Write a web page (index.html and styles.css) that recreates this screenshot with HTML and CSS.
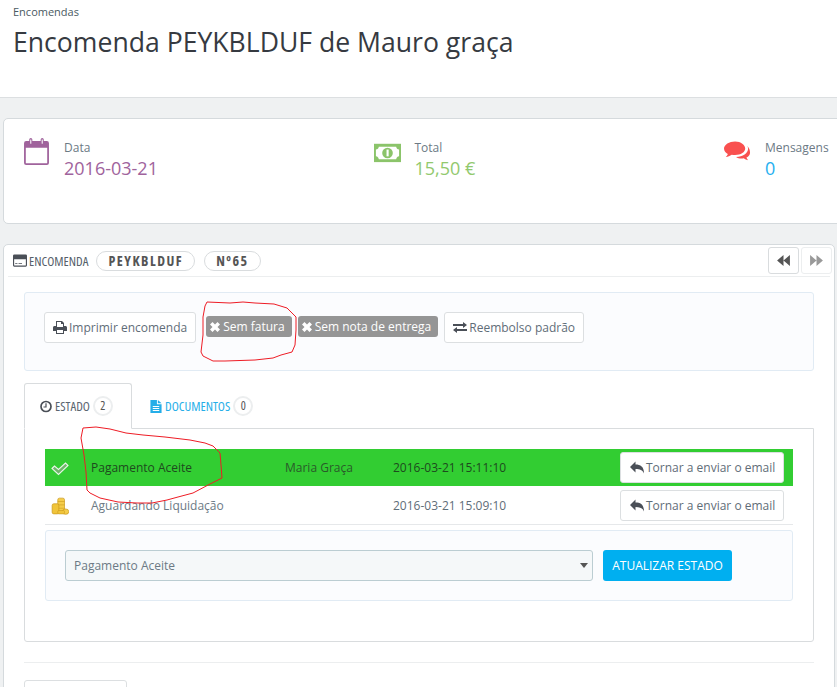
FILE: index.html
```html
<!DOCTYPE html>
<html lang="pt">
<head>
<meta charset="utf-8">
<title>Encomenda</title>
<link rel="stylesheet" href="styles.css">
</head>
<body>
<header class="page-head">
  <div class="crumb">Encomendas</div>
  <h1 class="title">Encomenda PEYKBLDUF de Mauro graça</h1>
</header>

<section class="kpis">
  <div class="kpi">
    <svg class="kpi-icon" viewBox="0 0 26 26"><path fill="#a0639c" fill-rule="evenodd" d="M3 3h3V1.500a1.500 1.500 0 0 1 3 0V3h8V1.500a1.500 1.500 0 0 1 3 0V3h3a2 2 0 0 1 2 2v19a2 2 0 0 1-2 2H3a2 2 0 0 1-2-2V5a2 2 0 0 1 2-2zm-.3 6.500v14.300c0 .3.2.5.5.5h19.600c.3 0 .5-.2.5-.5V9.500z"/><rect x="7" y="1.500" width="1" height="4" fill="#fff"/><rect x="18" y="1.500" width="1" height="4" fill="#fff"/></svg>
    <div><div class="kpi-label">Data</div><div class="kpi-value purple">2016-03-21</div></div>
  </div>
  <div class="kpi">
    <svg class="kpi-icon" viewBox="0 0 28 26"><rect x="0" y="5" width="28" height="19" fill="#8bc46a"/><path fill="#fff" d="M5 8h18c.4 1.800 1.200 2.600 3 3v7c-1.800.4-2.600 1.200-3 3H5c-.4-1.800-1.200-2.600-3-3v-7c1.800-.4 2.600-1.200 3-3z"/><circle cx="14" cy="14.500" r="5.500" fill="#8bc46a"/><rect x="13" y="11" width="2.200" height="7" fill="#fff"/></svg>
    <div><div class="kpi-label">Total</div><div class="kpi-value green">15,50 €</div></div>
  </div>
  <div class="kpi">
    <svg class="kpi-icon" viewBox="0 0 28 26"><path fill="#f9504f" d="M11.500 2.500C5.500 2.500 0 5.800 0 10c0 2.400 1.700 4.400 4 5.700-.5 1.300-1.300 2.200-2.200 3 2.300-.3 4.400-1 6.200-2.300 1.100.2 2.300.3 3.500.3 6 0 10.500-2.900 10.500-6.700s-4.500-7.500-10.500-7.500z"/><path fill="#f9504f" d="M24.200 7.200c.5 1 .8 1.900.8 2.800 0 5-5.400 8.500-12.500 8.700 1.500 1 3.500 1.600 5.600 1.600.8 0 1.600-.1 2.300-.2 1.300 1 2.800 1.600 4.600 1.900-.7-.8-1.300-1.600-1.700-2.800 2.200-1.100 3.700-3 3.700-5 0-2.700-1-5.100-2.800-7z"/></svg>
    <div><div class="kpi-label">Mensagens</div><div class="kpi-value blue">0</div></div>
  </div>
</section>

<section class="panel">
  <div class="panel-head">
    <svg class="ico head-ico" viewBox="0 0 16 14"><path fill="#4a4f57" fill-rule="evenodd" d="M1.500 0h13A1.500 1.500 0 0 1 16 1.500v11a1.500 1.500 0 0 1-1.500 1.500h-13A1.500 1.500 0 0 1 0 12.500v-11A1.500 1.500 0 0 1 1.500 0zM1.300 5.500v7c0 .1.100.2.200.2h13c.1 0 .2-.1.200-.2v-7zM2.500 10h2.600v1H2.500zm3.800 0h4v1h-4z"/></svg>
    <span class="head-label">ENCOMENDA</span>
    <span class="pill">PEYKBLDUF</span>
    <span class="pill">Nº65</span>
    <div class="pager">
      <span class="pager-btn"><svg class="pager-ico" viewBox="0 0 14 12"><path fill="#555" d="M7 0v12L0 6zm7 0v12L7 6z"/></svg></span>
      <span class="pager-btn off"><svg class="pager-ico" viewBox="0 0 14 12"><path fill="#999" d="M0 0l7 6-7 6zm7 0l7 6-7 6z"/></svg></span>
    </div>
  </div>

  <div class="well actions">
    <span class="btn"><svg class="ico" viewBox="0 0 14 13"><path fill="#4a4f57" fill-rule="evenodd" d="M3 0h6l2 2v3h1.500c.8 0 1.500.7 1.500 1.500V10h-3v3H3v-3H0V6.500C0 5.700.7 5 1.500 5H3zm1 1v5h6V3H8V1zm0 8v3h6V9z"/></svg>Imprimir encomenda</span>
    <span class="tag"><svg class="ico-x" viewBox="0 0 10 10"><path fill="#fff" d="M2.500 0L5 2.500 7.500 0 10 2.500 7.500 5 10 7.500 7.500 10 5 7.500 2.500 10 0 7.500 2.500 5 0 2.500z"/></svg>Sem fatura</span>
    <span class="tag"><svg class="ico-x" viewBox="0 0 10 10"><path fill="#fff" d="M2.500 0L5 2.500 7.500 0 10 2.500 7.500 5 10 7.500 7.500 10 5 7.500 2.500 10 0 7.500 2.500 5 0 2.500z"/></svg>Sem nota de entrega</span>
    <span class="btn"><svg class="ico" viewBox="0 0 14 12"><path fill="#4a4f57" d="M0 2.500h10V.5l4 3-4 3v-2H0zM14 7.500H4v-2l-4 3 4 3v-2h10z"/></svg>Reembolso padrão</span>
  </div>

  <div class="tabs">
    <div class="tab active">
      <svg class="tab-ico" viewBox="0 0 12 12"><circle cx="6" cy="6" r="5" fill="none" stroke="#4a4f57" stroke-width="1.700"/><path fill="none" stroke="#4a4f57" stroke-width="1.200" d="M6 2.800V6.500H3.500"/></svg>
      <span>ESTADO</span><span class="count">2</span>
    </div>
    <div class="tab link">
      <svg class="tab-ico" viewBox="0 0 12 14"><path fill="#25aee8" fill-rule="evenodd" d="M0 0h7v4.500h5V14H0zM8 0l4 3.500H8zM2.500 6.500v1h7v-1zm0 2.200v1h7v-1zm0 2.200v1h7v-1z"/></svg>
      <span>DOCUMENTOS</span><span class="count">0</span>
    </div>
  </div>

  <div class="tab-body">
    <div class="row current">
      <span class="cell-ico"><svg class="state-ico" viewBox="0 0 18 14"><path fill="#6fb56a" stroke="#e8f5e8" stroke-width="1.100" d="M1 7.500l2.500-2.500 4 3.500L14.500 2l2.500 2.500-9.500 9z"/></svg></span>
      <span class="cell-state">Pagamento Aceite</span>
      <span class="cell-name">Maria Graça</span>
      <span class="cell-date">2016-03-21 15:11:10</span>
      <span class="btn resend"><svg class="ico" viewBox="0 0 14 12"><path fill="#4a4f57" d="M5.500 0v3C10.500 3 14 5 14 12c-1.500-3.500-4-4.500-8.500-4.500V11L0 5.500z"/></svg>Tornar a enviar o email</span>
    </div>
    <div class="row">
      <span class="cell-ico"><svg class="state-ico" viewBox="0 0 16 16"><rect x="6" y="1" width="6" height="12" rx="1.500" fill="#f5cd4a" stroke="#c9971a" stroke-width=".6"/><path d="M6 4h6M6 7h6M6 10h6" stroke="#c9971a" stroke-width=".5"/><rect x="1" y="6" width="6" height="9" rx="1.500" fill="#f0c43a" stroke="#c9971a" stroke-width=".6"/><ellipse cx="13" cy="13" rx="2.800" ry="2.400" fill="#f5cd4a" stroke="#c9971a" stroke-width=".6"/><rect x="6" y="12" width="6" height="3" rx="1" fill="#f0c43a" stroke="#c9971a" stroke-width=".5"/></svg></span>
      <span class="cell-state">Aguardando Liquidação</span>
      <span class="cell-name"></span>
      <span class="cell-date">2016-03-21 15:09:10</span>
      <span class="btn resend"><svg class="ico" viewBox="0 0 14 12"><path fill="#4a4f57" d="M5.500 0v3C10.500 3 14 5 14 12c-1.500-3.500-4-4.500-8.500-4.500V11L0 5.500z"/></svg>Tornar a enviar o email</span>
    </div>
    <div class="well update">
      <div class="select">Pagamento Aceite<span class="caret"></span></div>
      <span class="primary">ATUALIZAR ESTADO</span>
    </div>
  </div>

  <hr class="rule">
  <div class="stub"></div>
</section>

<svg class="scribbles" viewBox="0 0 837 687" width="837" height="687">
  <path d="M207 302L230 303 243 302 255 303 274 304 287 308 296 317 296 330 295 345 292 352 281 355 273 358 255 360 225 361 213 361 203 356 201 352 203 335 203 317 205 306z"/>
  <path d="M83 428L96 427 110 429 126 433 143 435 165 437 190 440 205 443 213 446 220 453 221 465 222 478 210 484 193 493 178 497 167 500 152 503 137 503 118 502 100 498 90 493 87 490 86 472 84 455 81 438z"/>
</svg>
</body>
</html>
```
FILE: styles.css
```css
* { box-sizing: border-box; }
html, body { margin: 0; height: 687px; overflow: hidden; }
body {
  position: relative;
  background: #eff1f2;
  font-family: "Open Sans", sans-serif;
  font-size: 12px;
  color: #6c868e;
}
.page-head {
  height: 98px;
  background: #fff;
  border-bottom: 1px solid #dcdfe1;
  padding: 4px 14px 0 13px;
}
.crumb { font-size: 11px; line-height: 15px; color: #4a5a62; }
.title {
  margin: 5px 0 0;
  font-size: 26.600px;
  font-weight: 400;
  line-height: 36px;
  color: #363a41;
}
.kpis {
  display: flex;
  margin: 20px 0 0 3px;
  width: 900px;
  height: 106px;
  padding: 19px 0 0 19px;
  background: #fff;
  border: 1px solid #d5dadd;
  border-radius: 5px;
}
.kpi { flex: 0 0 350.500px; display: flex; gap: 14px; }
.kpi-icon { width: 27px; height: 27px; flex: none; }
.kpi-label { font-size: 12px; line-height: 17px; color: #6c7a85; margin-top: 1px; }
.kpi-value { font-size: 18px; line-height: 24px; }
.purple { color: #a0639c; }
.green { color: #92c96e; }
.blue { color: #25b0f0; }
.panel {
  margin: 20px 0 0 3px;
  width: 832px;
  height: 500px;
  padding: 0 20px;
  background: #fff;
  border: 1px solid #d5dadd;
  border-radius: 5px;
}
.panel-head {
  display: flex;
  align-items: center;
  height: 32px;
  margin: 0 -16px;
  padding: 0 0 0 5px;
  border-bottom: 1px solid #eceeef;
}
.head-ico { width: 15px; height: 13px; margin-right: 3px; }
.head-label {
  font-stretch: 75%;
  font-size: 13px;
  color: #55606a;
  margin-right: 8px;
}
.pill {
  font-stretch: 75%;
  font-weight: 700;
  font-size: 14px;
  letter-spacing: 1.500px;
  color: #555;
  height: 20px;
  line-height: 18px;
  padding: 0 11px;
  margin-right: 9px;
  border: 1px solid #d9dcde;
  border-radius: 10px;
}
.pager { display: flex; gap: 2px; margin: 0 -2px 0 auto; }
.pager-btn {
  display: flex;
  align-items: center;
  justify-content: center;
  width: 31px;
  height: 27px;
  border: 1px solid #d9dcde;
  border-radius: 3px;
}
.pager-btn.off { border-color: #eceeef; }
.pager-ico { width: 13px; height: 11px; }
.well {
  background: #fbfcfe;
  border: 1px solid #e1ebf4;
  border-radius: 3px;
}
.actions {
  display: flex;
  align-items: flex-start;
  gap: 6px;
  height: 79px;
  margin-top: 15px;
  padding: 19px;
}
.btn {
  display: inline-flex;
  align-items: center;
  height: 31px;
  padding: 0 8px;
  background: #fff;
  border: 1px solid #dcdfe1;
  border-radius: 3px;
  font-size: 12px;
  color: #5f6d78;
  white-space: nowrap;
}
.ico { width: 14px; height: 13px; margin-right: 2px; flex: none; }
.actions .btn + .tag { margin-left: 4px; }
.tag {
  display: inline-flex;
  align-items: center;
  height: 21px;
  margin-top: 4px;
  padding: 0 7px 0 4px;
  background: #959595;
  border-radius: 3px;
  font-size: 12px;
  color: #fff;
  white-space: nowrap;
}
.ico-x { width: 10px; height: 10px; margin-right: 3px; }
.tabs { display: flex; margin-top: 12px; }
.tab {
  display: flex;
  align-items: center;
  height: 46px;
  padding: 0 15px;
  font-stretch: 75%;
  font-size: 13px;
  color: #5a6570;
  position: relative;
  z-index: 1;
}
.tab.active {
  width: 108px;
  background: #fff;
  border: 1px solid #d9dcde;
  border-bottom-color: #fff;
  border-radius: 3px 3px 0 0;
}
.tab.link { color: #25aee8; padding-left: 18px; }
.tab-ico { width: 12px; height: 13px; margin-right: 3px; flex: none; }
.count {
  width: 20px;
  height: 20px;
  margin-left: 3px;
  border: 2px solid #eceeef;
  border-radius: 50%;
  text-align: center;
  line-height: 16px;
  font-size: 12px;
  color: #555;
}
.tab-body {
  height: 214px;
  margin-top: -1px;
  padding: 20px 20px 0;
  border: 1px solid #d9dcde;
  border-radius: 0 0 3px 3px;
}
.row {
  display: flex;
  align-items: center;
  height: 38px;
  border-bottom: 1px solid #e6e8ea;
  color: #6c7a85;
}
.row.current {
  height: 37px;
  margin-bottom: 1px;
  background: #32cd32;
  border-bottom: 0;
  color: #1e4a1e;
}
.cell-ico { flex: 0 0 46px; padding-left: 6px; display: flex; }
.state-ico { width: 18px; height: 18px; }
.cell-state { flex: 0 0 194px; }
.cell-name { flex: 0 0 108px; color: #2a5a2a; }
.cell-date { flex: 0 0 227px; }
.row:not(.current) .cell-date { color: #5f6d78; }
.resend { padding: 0 8px 0 9px; }
.update {
  display: flex;
  gap: 10px;
  height: 71px;
  margin-top: 5px;
  padding: 19px;
}
.select {
  position: relative;
  width: 528px;
  height: 31px;
  padding-left: 8px;
  line-height: 30px;
  font-size: 12px;
  background: #f5f8f9;
  border: 1px solid #bbcdd2;
  border-radius: 3px;
  color: #6c7a85;
}
.caret {
  position: absolute;
  right: 4px;
  top: 12px;
  border: 4px solid transparent;
  border-top: 5px solid #555;
  border-bottom: 0;
}
.primary {
  width: 129px;
  height: 31px;
  line-height: 31px;
  text-align: center;
  background: #00aff0;
  border-radius: 3px;
  color: #fff;
  font-size: 12px;
}
.rule {
  margin: 20px 0 0;
  height: 1px;
  border: 0;
  background: #eceeef;
}
.stub {
  width: 103px;
  height: 31px;
  margin-top: 17px;
  background: #fff;
  border: 1px solid #dcdfe1;
  border-radius: 3px;
}
.scribbles {
  position: absolute;
  left: 0;
  top: 0;
  z-index: 2;
  pointer-events: none;
}
.scribbles path { fill: none; stroke: #ee1c25; stroke-width: 1; }
```
